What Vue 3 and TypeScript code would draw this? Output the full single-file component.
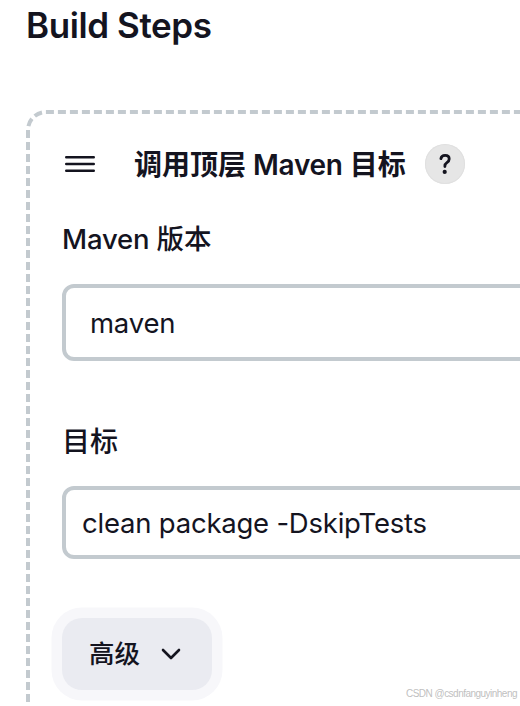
<script setup lang="ts">
import { ref } from 'vue'

const version = ref<string>('maven')
const goals = ref<string>('clean package -DskipTests')
</script>

<template>
  <main class="page">
    <h1 class="title">Build Steps</h1>
    <section class="step">
      <svg class="outline" width="494" height="592" viewBox="0 0 494 592" aria-hidden="true">
        <path d="M2 592V20A18 18 0 0 1 20 2H494" />
      </svg>
      <header class="step-head">
        <svg class="handle" width="32" height="20" viewBox="0 0 32 20" aria-hidden="true">
          <path d="M2.2 3.2H29.8M2.2 10H29.8M2.2 16.8H29.8" />
        </svg>
        <h2 class="step-name">调用顶层 <span class="latin">Maven</span> 目标</h2>
        <button class="help" type="button">
          <svg width="40" height="40" viewBox="0 0 40 40" aria-hidden="true">
            <path d="M15.9 14.7C16.2 12.5 17.8 11.3 20.1 11.3C22.6 11.3 24.2 12.8 24.2 15C24.2 16.8 23.2 17.8 21.9 18.7C20.6 19.6 19.9 20.5 19.9 22V22.5" />
            <circle cx="19.7" cy="27.9" r="2.1" />
          </svg>
        </button>
      </header>
      <label class="label version-label"><span class="label-latin">Maven</span> 版本</label>
      <div class="field select">{{ version }}</div>
      <label class="label goals-label">目标</label>
      <div class="field input">{{ goals }}</div>
      <button class="advanced" type="button">
        <span class="advanced-text">高级</span>
        <svg width="20" height="12" viewBox="0 0 20 12" aria-hidden="true">
          <path d="M2 2L10 10L18 2" />
        </svg>
      </button>
    </section>
    <span class="credit">CSDN @csdnfanguyinheng</span>
  </main>
</template>

<style>
body {
  margin: 0;
  background: #fff;
}
</style>

<style scoped>
.page {
  position: relative;
  box-sizing: border-box;
  width: 520px;
  height: 706px;
  padding-left: 26px;
  overflow: hidden;
  color: #14141f;
  font-family: Inter, "Noto Sans CJK SC", sans-serif;
}
.title {
  height: 50px;
  margin: 0 0 60px;
  font-size: 35px;
  font-weight: 600;
  line-height: 50px;
  letter-spacing: -0.4px;
  white-space: nowrap;
}
.step {
  position: relative;
  box-sizing: border-box;
  height: 592px;
  padding: 34px 0 0 36px;
}
.outline {
  position: absolute;
  top: 0;
  left: 0;
}
.outline path {
  fill: none;
  stroke: #c3cacf;
  stroke-width: 4;
  stroke-dasharray: 8 4;
}
.step-head {
  display: flex;
  align-items: center;
  height: 40px;
  padding-left: 2px;
}
.handle {
  margin-right: 38px;
}
.handle path {
  fill: none;
  stroke: #14141f;
  stroke-width: 2.4;
  stroke-linecap: round;
}
.step-name {
  width: 291px;
  margin: 0;
  padding-top: 2px;
  font-size: 28px;
  font-weight: 600;
  line-height: 42px;
  white-space: nowrap;
}
.latin {
  letter-spacing: -0.3px;
}
.help {
  width: 40px;
  height: 40px;
  padding: 0;
  border: 0;
  border-radius: 50%;
  background: #e6e6e6;
  box-shadow: inset 0 0 0 1px #e0e0e0;
}
.help svg {
  display: block;
}
.help path {
  fill: none;
  stroke: #14141f;
  stroke-width: 2.8;
  stroke-linecap: round;
}
.help circle {
  fill: #14141f;
}
.label {
  display: block;
  height: 40px;
  font-size: 27.5px;
  font-weight: 500;
  line-height: 42px;
  white-space: nowrap;
}
.label-latin {
  letter-spacing: -0.2px;
}
.version-label {
  margin-top: 35px;
  line-height: 40px;
}
.goals-label {
  margin-top: 60px;
  font-size: 28px;
}
.field {
  box-sizing: border-box;
  width: 480px;
  border: 4px solid #c3cacf;
  border-radius: 12px;
  font-size: 27.5px;
  letter-spacing: -0.22px;
  white-space: nowrap;
}
.select {
  height: 77px;
  margin-top: 25px;
  padding-left: 24px;
  line-height: 71px;
}
.input {
  height: 73px;
  margin-top: 25px;
  padding-left: 16px;
  line-height: 67px;
}
.advanced {
  display: flex;
  align-items: center;
  width: 150px;
  height: 72px;
  margin: 59px 0 0;
  padding: 0 0 0 27px;
  border: 0;
  border-radius: 20px;
  background: #eaebf1;
  box-shadow: 0 0 0 10.5px #f7f7fa;
  color: #14141f;
  font-family: inherit;
  font-size: 25.5px;
  font-weight: 500;
}
.advanced-text {
  padding-bottom: 5px;
}
.advanced svg {
  margin-left: 21px;
}
.advanced path {
  fill: none;
  stroke: #14141f;
  stroke-width: 2.6;
  stroke-linecap: round;
  stroke-linejoin: round;
}
.credit {
  position: absolute;
  right: 3px;
  bottom: 5px;
  color: #bfbfbf;
  font-family: "Liberation Sans", sans-serif;
  font-size: 10px;
  line-height: 14px;
  letter-spacing: -0.52px;
}
</style>
